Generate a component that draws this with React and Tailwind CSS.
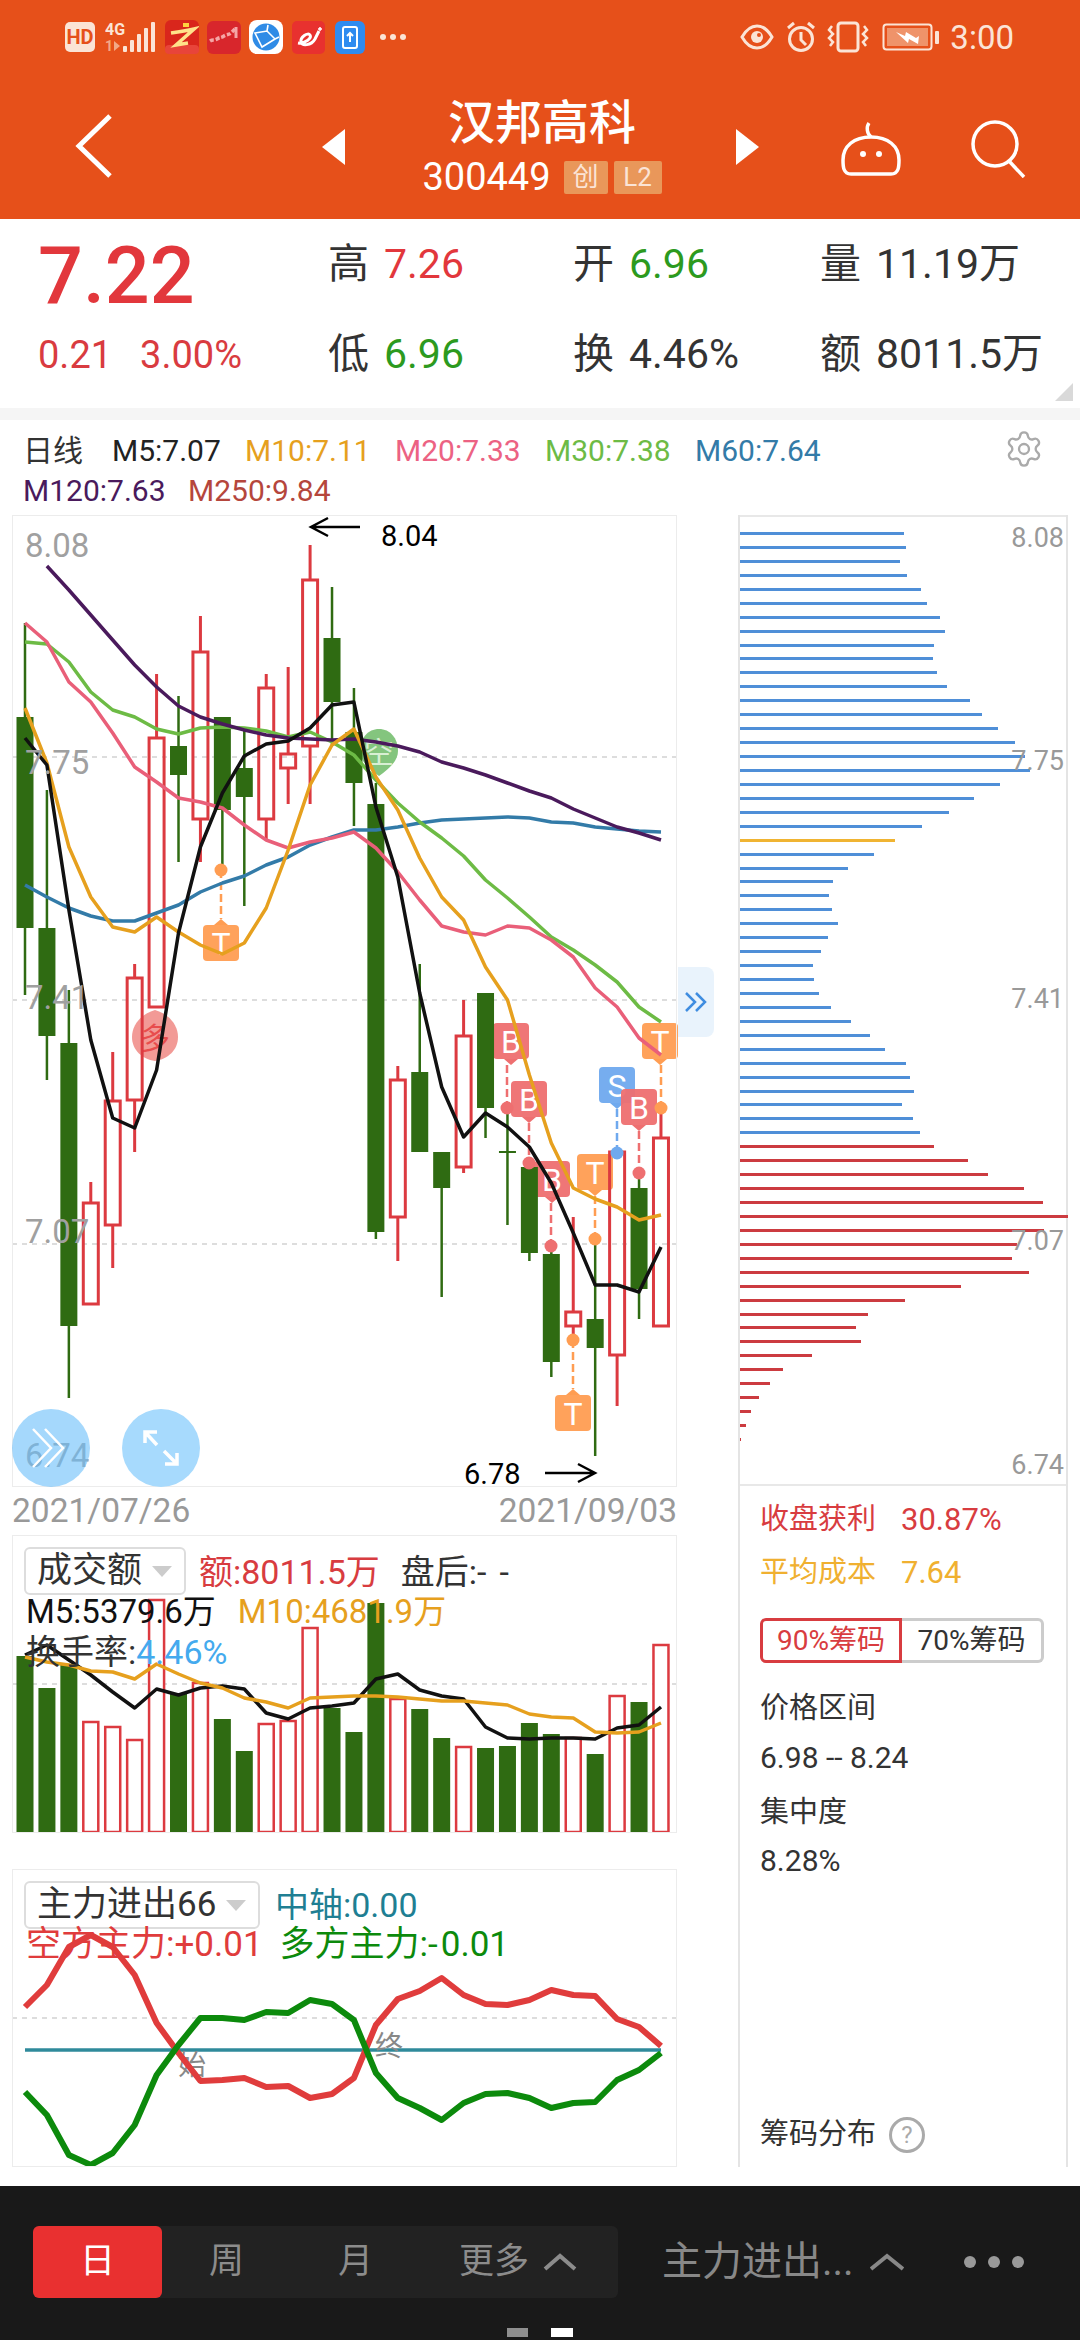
import { Settings } from "lucide-react";

const GREEN = "#2f6b12";
const RED = "#dc3a40";
const xAt = (i) => 25 + 21.93 * i;
const line = (ys, from = 0) => ys.map((y, i) => `${xAt(i + from).toFixed(1)},${y}`).join(" ");

// type, wick top, body top, body bottom, wick bottom
const candles = [
  ["g", 623, 717, 928, 995],
  ["g", 790, 928, 1036, 1080],
  ["g", 990, 1043, 1326, 1398],
  ["r", 1182, 1203, 1304, 1304],
  ["r", 1052, 1101, 1225, 1268],
  ["r", 964, 978, 1100, 1152],
  ["r", 674, 738, 1007, 1007],
  ["g", 696, 746, 775, 862],
  ["r", 616, 652, 819, 862],
  ["g", 717, 717, 810, 870],
  ["g", 730, 768, 797, 906],
  ["r", 674, 688, 819, 840],
  ["r", 667, 754, 768, 804],
  ["r", 545, 580, 746, 804],
  ["g", 587, 638, 702, 746],
  ["g", 688, 732, 783, 826],
  ["g", 783, 804, 1232, 1239],
  ["r", 1066, 1080, 1217, 1261],
  ["g", 964, 1072, 1152, 1152],
  ["g", 1152, 1152, 1188, 1297],
  ["r", 1000, 1036, 1167, 1173],
  ["g", 993, 993, 1108, 1138],
  ["g", 1108, 1151, 1153, 1225],
  ["g", 1163, 1167, 1253, 1261],
  ["g", 1247, 1254, 1362, 1377],
  ["r", 1217, 1312, 1326, 1340],
  ["g", 1240, 1319, 1348, 1456],
  ["r", 1152, 1152, 1355, 1406],
  ["g", 1173, 1188, 1289, 1319],
  ["r", 1108, 1138, 1326, 1326],
];

const m5 = [738, 765, 910, 1040, 1118, 1128, 1070, 933, 847, 793, 756, 744, 741, 728, 705, 702, 807, 877, 993, 1087, 1137, 1113, 1127, 1147, 1183, 1233, 1285, 1285, 1292, 1247];
const m10 = [708, 763, 847, 897, 927, 932, 917, 932, 945, 954, 943, 908, 850, 785, 745, 729, 777, 810, 858, 897, 920, 967, 1000, 1075, 1143, 1188, 1199, 1207, 1220, 1215];
const m20 = [623, 642, 682, 702, 733, 767, 782, 798, 802, 808, 825, 840, 848, 842, 838, 832, 848, 872, 900, 926, 932, 935, 926, 928, 940, 957, 988, 1007, 1038, 1055];
const m30 = [642, 644, 662, 692, 710, 717, 729, 734, 728, 727, 728, 731, 737, 732, 742, 755, 780, 803, 822, 838, 856, 880, 898, 917, 937, 950, 965, 982, 1007, 1022];
const m60 = [885, 897, 908, 916, 921, 921, 913, 905, 892, 883, 876, 865, 857, 845, 837, 830, 830, 827, 823, 820, 819, 818, 817, 818, 822, 823, 827, 829, 831, 832];
const m120 = [566, 590, 615, 640, 665, 687, 706, 717, 724, 730, 735, 738, 739, 740, 739, 742, 746, 752, 762, 768, 775, 783, 791, 798, 809, 818, 827, 833, 840];

const volTops = [1656, 1688, 1665, 1722, 1727, 1740, 1600, 1693, 1683, 1719, 1751, 1724, 1721, 1628, 1708, 1732, 1603, 1699, 1709, 1738, 1747, 1748, 1746, 1723, 1734, 1738, 1754, 1696, 1702, 1645];
const volM5 = [1655, 1645, 1660, 1675, 1692, 1708, 1689, 1695, 1688, 1686, 1689, 1713, 1719, 1708, 1706, 1703, 1679, 1674, 1690, 1696, 1699, 1727, 1738, 1739, 1738, 1738, 1739, 1728, 1725, 1707];
const volM10 = [1657, 1662, 1665, 1671, 1672, 1679, 1664, 1674, 1683, 1688, 1698, 1702, 1708, 1698, 1697, 1696, 1696, 1697, 1699, 1701, 1701, 1703, 1705, 1714, 1717, 1718, 1732, 1733, 1732, 1723];

const shortLine = [2007, 1985, 1947, 1935, 1947, 1975, 2023, 2053, 2081, 2080, 2078, 2087, 2086, 2098, 2094, 2078, 2025, 1999, 1991, 1978, 1995, 2004, 2005, 2000, 1990, 1995, 1996, 2019, 2027, 2046];
const longLine = [2092, 2115, 2155, 2165, 2153, 2125, 2075, 2045, 2018, 2018, 2020, 2012, 2013, 2000, 2004, 2020, 2073, 2098, 2108, 2120, 2103, 2094, 2093, 2098, 2108, 2103, 2102, 2080, 2070, 2053];

const chipBlue = [164, 166, 160, 167, 181, 187, 200, 205, 194, 193, 197, 207, 230, 242, 258, 275, 285, 290, 260, 234, 209, 182];
const chipBlue2 = [134, 108, 93, 89, 92, 98, 88, 81, 73, 74, 79, 91, 111, 130, 145, 166, 170, 174, 162, 173, 180];
const chipRed = [194, 228, 248, 284, 303, 328, 304, 277, 272, 289, 221, 165, 128, 116, 121, 72, 43, 30, 19, 11, 6, 1];
const chips = [
  ...chipBlue.map((w) => [w, "#4f8fd8"]),
  [155, "#f0b432"],
  ...chipBlue2.map((w) => [w, "#4f8fd8"]),
  ...chipRed.map((w) => [w, "#cc3b40"]),
];

// box left/top, dot position, letter, colour
const markers = [
  { x: 203, y: 925, dx: 221, dy: 870, t: "T", c: "#ff9d52", up: true },
  { x: 493, y: 1023, dx: 507, dy: 1108, t: "B", c: "#ee6f70" },
  { x: 511, y: 1081, dx: 529, dy: 1163, t: "B", c: "#ee6f70" },
  { x: 534, y: 1161, dx: 551, dy: 1246, t: "B", c: "#ee6f70" },
  { x: 577, y: 1154, dx: 595, dy: 1239, t: "T", c: "#ff9d52" },
  { x: 599, y: 1067, dx: 617, dy: 1153, t: "S", c: "#6fa9ee" },
  { x: 621, y: 1089, dx: 639, dy: 1173, t: "B", c: "#ee6f70" },
  { x: 642, y: 1023, dx: 661, dy: 1108, t: "T", c: "#ff9d52" },
  { x: 555, y: 1395, dx: 573, dy: 1340, t: "T", c: "#ff9d52", up: true },
];

function Marker({ m }) {
  const cx = m.x + 18;
  const tipY = m.up ? m.y - 6 : m.y + 42;
  return (
    <g>
      <line x1={m.dx} y1={m.up ? m.dy : tipY} x2={m.dx} y2={m.up ? tipY : m.dy} stroke={m.c} strokeWidth="2.5" strokeDasharray="8 4" />
      <rect x={m.x} y={m.y} width="36" height="36" rx="4" fill={m.c} opacity="0.95" />
      <polygon points={m.up ? `${cx - 7},${m.y} ${cx + 7},${m.y} ${cx},${tipY}` : `${cx - 7},${m.y + 36} ${cx + 7},${m.y + 36} ${cx},${tipY}`} fill={m.c} />
      <text x={cx} y={m.y + 30} textAnchor="middle" fontSize="32" fill="#fff" fontFamily="Roboto">{m.t}</text>
    </g>
  );
}

function MainChart() {
  return (
    <svg viewBox="12 515 665 972" className="block h-[972px] w-[665px] overflow-visible">
      {[757, 1000, 1244].map((y) => (
        <line key={y} x1="12" x2="677" y1={y} y2={y} stroke="#ddd" strokeWidth="2" strokeDasharray="5 5" />
      ))}
      <path d="M379 729c11 0 19 9 19 22 0 10-9 18-19 25-10-7-19-15-19-25 0-13 8-22 19-22z" fill="#84c57e" />
      <text x="379" y="763" textAnchor="middle" fontSize="30" fill="#d8efd4" fontFamily="Noto Sans CJK SC">空</text>
      <path d="M155 1010c14 4 23 15 23 27 0 13-10 22-23 24-13-2-23-11-23-24 0-12 9-23 23-27z" fill="#f29a96" />
      <text x="155" y="1049" textAnchor="middle" fontSize="30" fill="#e84d4d" fontFamily="Noto Sans CJK SC">多</text>
      {markers.map((m, i) => (
        <Marker key={i} m={m} />
      ))}
      {candles.map(([type, wt, bt, bb, wb], i) => {
        const x = xAt(i);
        if (type === "g") {
          return (
            <g key={i}>
              <line x1={x} x2={x} y1={wt} y2={wb} stroke={GREEN} strokeWidth="2.5" />
              <rect x={x - 8.5} y={bt} width="17" height={bb - bt} fill={GREEN} />
            </g>
          );
        }
        return (
          <g key={i} stroke={RED} strokeWidth="3">
            <line x1={x} x2={x} y1={wt} y2={bt} />
            <line x1={x} x2={x} y1={bb} y2={wb} />
            <rect x={x - 7.5} y={bt} width="15" height={bb - bt} fill="none" />
          </g>
        );
      })}
      {markers.map((m, i) => (
        <circle key={i} cx={m.dx} cy={m.dy} r="6.5" fill={m.c} />
      ))}
      <g fill="none" strokeWidth="3.5" strokeLinejoin="round">
        <polyline points={line(m60)} stroke="#337ba8" />
        <polyline points={line(m30)} stroke="#6dbb45" />
        <polyline points={line(m20)} stroke="#e95f79" />
        <polyline points={line(m120, 1)} stroke="#4a1a5c" />
        <polyline points={line(m10)} stroke="#e6a01e" />
        <polyline points={line(m5)} stroke="#111" />
      </g>
      <g fill="none" stroke="#000" strokeWidth="2.5">
        <path d="M360 527H311M328 518l-17 9 17 9" />
        <path d="M545 1473H595M578 1464l17 9-17 9" />
      </g>
      <text x="381" y="546" fontSize="29" fill="#000" fontFamily="Roboto">8.04</text>
      <text x="464" y="1484" fontSize="29" fill="#000" fontFamily="Roboto">6.78</text>
    </svg>
  );
}

function VolumeChart() {
  return (
    <svg viewBox="12 1535 665 298" className="block h-[298px] w-[665px]">
      <line x1="12" x2="677" y1="1684" y2="1684" stroke="#ddd" strokeWidth="2" strokeDasharray="5 5" />
      {volTops.map((top, i) => {
        const x = xAt(i);
        return candles[i][0] === "g" ? (
          <rect key={i} x={x - 8.5} y={top} width="17" height={1833 - top} fill={GREEN} />
        ) : (
          <rect key={i} x={x - 7.5} y={top} width="15" height={1832 - top} fill="#fff" stroke={RED} strokeWidth="2.5" />
        );
      })}
      <g fill="none" strokeWidth="3.5" strokeLinejoin="round">
        <polyline points={line(volM5)} stroke="#111" />
        <polyline points={line(volM10)} stroke="#e6a01e" />
      </g>
    </svg>
  );
}

function FlowChart() {
  return (
    <svg viewBox="12 1869 665 298" className="block h-[298px] w-[665px]">
      <line x1="12" x2="677" y1="2018" y2="2018" stroke="#ddd" strokeWidth="2" strokeDasharray="5 5" />
      <line x1="25" x2="661" y1="2050" y2="2050" stroke="#2f8a9b" strokeWidth="3.5" />
      <text x="178" y="2075" fontSize="28" fill="#888" fontFamily="Noto Sans CJK SC">始</text>
      <text x="375" y="2056" fontSize="28" fill="#888" fontFamily="Noto Sans CJK SC">终</text>
      <g fill="none" strokeWidth="6" strokeLinejoin="round">
        <polyline points={line(shortLine)} stroke="#e03c3c" />
        <polyline points={line(longLine)} stroke="#0c8a0c" />
      </g>
    </svg>
  );
}

function Stat({ label, value, color = "text-[#333]" }) {
  return (
    <div className="flex h-[50px] items-center gap-[15px] text-[#333]">
      <span className="text-[41px]">{label}</span>
      <span className={`text-[41px] ${color}`}>{value}</span>
    </div>
  );
}

function StatusBar() {
  return (
    <div className="flex h-[74px] items-center text-[#fbe4d6]">
      <span className="ml-[65px] flex h-[30px] w-[30px] items-center justify-center rounded-[5px] bg-[#fbe4d6] text-[20px] font-bold leading-none text-[#e6501a]">HD</span>
      <svg width="50" height="32" viewBox="0 0 50 32" className="ml-[10px]">
        <text x="0" y="14" fontSize="16" fontWeight="700" fill="#fbe4d6" fontFamily="Roboto">4G</text>
        <text x="0" y="30" fontSize="14" fontWeight="700" fill="#f2a987" fontFamily="Roboto">1</text>
        <path d="M9 20l6 5-6 5z" fill="#f2a987" />
        <g fill="#fbe4d6">
          <rect x="18" y="25" width="4" height="6" rx="1" />
          <rect x="25" y="19" width="4" height="12" rx="1" />
          <rect x="32" y="13" width="4" height="18" rx="1" />
          <rect x="39" y="7" width="4" height="24" rx="1" />
          <rect x="46" y="1" width="4" height="30" rx="1" />
        </g>
      </svg>
      <svg width="34" height="34" viewBox="0 0 34 34" className="ml-[10px]">
        <rect width="34" height="34" rx="6" fill="#d9261c" />
        <rect y="25" width="34" height="9" rx="4" fill="#e8443a" />
        <path d="M6 13c7-1 14-2 23-4L11 25l12-2" fill="none" stroke="#ffe28a" strokeWidth="3.5" />
        <path d="M18 3h6v4h-6z" fill="#ffd23f" />
      </svg>
      <svg width="34" height="33" viewBox="0 0 34 33" className="ml-[8px]">
        <rect width="34" height="33" rx="6" fill="#d8262c" />
        <path d="M3 20c3-2 4 0 7-2s4-1 7-3 5-1 7-3 4-4 5-5" fill="none" stroke="#f5a6a6" strokeWidth="3.5" strokeDasharray="4 2" />
        <path d="M29 6v11" stroke="#f5a6a6" strokeWidth="3" />
      </svg>
      <svg width="34" height="34" viewBox="0 0 34 34" className="ml-[8px]">
        <rect width="34" height="34" rx="8" fill="#fff" />
        <circle cx="17" cy="17" r="13.5" fill="#2f8be6" />
        <path d="M6 13l12-2 8 8-13 8zM18 11l1-6M26 19l4-2M13 27l-7-14" fill="none" stroke="#fff" strokeWidth="1.6" />
      </svg>
      <svg width="33" height="33" viewBox="0 0 33 33" className="ml-[9px]">
        <rect width="33" height="33" rx="5" fill="#e8312f" />
        <path d="M6 22c7 1 14-5 12-8s-10 2-9 7c1 4 10 4 14-3l4-8" fill="none" stroke="#fff" strokeWidth="3" />
        <path d="M26 8h4M28 6v4" stroke="#fff" strokeWidth="1.5" />
      </svg>
      <svg width="30" height="33" viewBox="0 0 30 33" className="ml-[10px]">
        <rect width="30" height="33" rx="6" fill="#2f8bf0" />
        <rect x="8" y="6" width="14" height="21" rx="2" fill="none" stroke="#fff" strokeWidth="2" />
        <path d="M15 21v-9M12 15l3-3 3 3" fill="none" stroke="#fff" strokeWidth="2" />
      </svg>
      <span className="ml-[15px] flex gap-[4px]">
        <i className="h-[6px] w-[6px] rounded-full bg-[#fbe4d6]" />
        <i className="h-[6px] w-[6px] rounded-full bg-[#fbe4d6]" />
        <i className="h-[6px] w-[6px] rounded-full bg-[#fbe4d6]" />
      </span>
      <svg width="34" height="26" viewBox="0 0 34 26" fill="none" stroke="currentColor" strokeWidth="3" className="ml-auto">
        <path d="M2 13C6 6 11 2 17 2s11 4 15 11c-4 7-9 11-15 11S6 20 2 13z" />
        <circle cx="17" cy="13" r="6" fill="currentColor" stroke="none" />
        <circle cx="19" cy="11" r="2" fill="#e6501a" stroke="none" />
      </svg>
      <svg width="32" height="32" viewBox="0 0 32 32" fill="none" stroke="currentColor" strokeWidth="3" className="ml-[11px]">
        <circle cx="16" cy="18" r="11.5" />
        <path d="M16 11v8l5 5M3 7l6-5M29 7l-6-5" />
      </svg>
      <svg width="42" height="32" viewBox="0 0 42 32" fill="none" stroke="currentColor" strokeWidth="3" className="ml-[10px]">
        <rect x="11" y="2" width="20" height="28" rx="3" />
        <path d="M5 5 2 9l4 4-4 4 4 4-3 4M37 5l3 4-4 4 4 4-4 4 3 4" strokeWidth="2.5" />
      </svg>
      <svg width="58" height="28" viewBox="0 0 58 28" className="ml-[13px]">
        <rect x="1.5" y="1.5" width="48" height="25" rx="3" fill="none" stroke="currentColor" strokeWidth="2" />
        <rect x="5" y="5" width="41" height="18" fill="#ef936a" />
        <rect x="53" y="8" width="4" height="13" rx="1" fill="currentColor" />
        <path d="M14 9l9 4 1-4 10 6 3-2-1 8-9-5-1 4z" fill="#fff" />
      </svg>
      <span className="ml-[10px] mr-[66px] text-[33px] leading-none">3:00</span>
    </div>
  );
}

function NavBar() {
  return (
    <div className="relative flex h-[145px] items-center">
      <svg width="40" height="66" viewBox="0 0 40 66" fill="none" stroke="#fff" strokeWidth="5" className="ml-[74px] mb-[2px]">
        <path d="M36 3 5 33l31 30" />
      </svg>
      <div className="ml-[208px] border-y-[18px] border-r-[23px] border-y-transparent border-r-white" />
      <div className="ml-[75px] flex w-[244px] flex-col items-center">
        <div className="text-[47px] font-medium leading-[56px] text-white">汉邦高科</div>
        <div className="mt-[5px] flex items-center">
          <span className="text-[38px] leading-[42px] text-white">300449</span>
          <span className="ml-[13px] flex h-[33px] w-[44px] items-center justify-center rounded-[2px] bg-[#e9975a] text-[26px] text-[#fbe4d6]">创</span>
          <span className="ml-[6px] flex h-[33px] w-[48px] items-center justify-center rounded-[2px] bg-[#e9975a] text-[26px] text-[#fbe4d6]">L2</span>
        </div>
      </div>
      <div className="ml-[72px] border-y-[18px] border-l-[23px] border-y-transparent border-l-white" />
      <svg width="62" height="58" viewBox="0 0 62 58" fill="none" stroke="#fff" strokeWidth="3.5" className="ml-[81px] mt-[2px]">
        <path d="M31 18c-4-3-5-10-2-14" />
        <path d="M3 41C3 27 14 18 31 18s28 9 28 23c0 6 0 14-8 14H11c-8 0-8-8-8-14z" />
        <circle cx="23" cy="35" r="3" fill="#fff" stroke="none" />
        <circle cx="39" cy="35" r="3" fill="#fff" stroke="none" />
      </svg>
      <svg width="58" height="58" viewBox="0 0 58 58" fill="none" stroke="#fff" strokeWidth="3.5" className="ml-[68px] mt-[4px]">
        <circle cx="25" cy="24" r="22" />
        <path d="M39 41l15 16" />
      </svg>
    </div>
  );
}

function QuoteBlock() {
  return (
    <div className="relative grid h-[189px] grid-cols-[290px_245px_247px_auto] pl-[38px] pt-[21px]">
      <div className="flex flex-col">
        <div className="h-[90px] text-[79px] font-medium leading-[72px] text-[#e2373c]">7.22</div>
        <div className="flex h-[50px] items-center gap-[28px] text-[38px] text-[#d93b40]">
          <span>0.21</span>
          <span>3.00%</span>
        </div>
      </div>
      <div className="flex flex-col gap-[40px]">
        <Stat label="高" value="7.26" color="text-[#e2373c]" />
        <Stat label="低" value="6.96" color="text-[#2c9a1e]" />
      </div>
      <div className="flex flex-col gap-[40px]">
        <Stat label="开" value="6.96" color="text-[#2c9a1e]" />
        <Stat label="换" value="4.46%" />
      </div>
      <div className="flex flex-col gap-[40px]">
        <Stat label="量" value="11.19万" />
        <Stat label="额" value="8011.5万" />
      </div>
      <svg width="18" height="18" viewBox="0 0 18 18" className="absolute right-[7px] top-[164px]">
        <path d="M18 0v18H0z" fill="#d9d9d9" />
      </svg>
    </div>
  );
}

function MaLegend() {
  return (
    <div className="relative h-[95px] pl-[23px] pt-[11px] text-[30px] leading-[40px]">
      <div className="flex">
        <span className="w-[89px] text-[#333]">日线</span>
        <span className="w-[133px] text-[#222]">M5:7.07</span>
        <span className="w-[150px] text-[#e6a01e]">M10:7.11</span>
        <span className="w-[150px] text-[#ec6283]">M20:7.33</span>
        <span className="w-[150px] text-[#6dbb45]">M30:7.38</span>
        <span className="text-[#337ba8]">M60:7.64</span>
      </div>
      <div className="flex">
        <span className="w-[165px] text-[#4a1a5c]">M120:7.63</span>
        <span className="text-[#b5463c]">M250:9.84</span>
      </div>
      <Settings className="absolute right-[36px] top-[9px] text-[#aaa]" size={40} strokeWidth={1.4} />
    </div>
  );
}

function Selector({ label, className }) {
  return (
    <div className={`absolute left-[12px] top-[12px] flex h-[48px] items-center rounded-[6px] border-2 border-[#ddd] bg-white pl-[11px] text-[#333] ${className}`}>
      {label}
      <span className="absolute right-[12px] top-[17px] border-x-[10px] border-t-[11px] border-x-transparent border-t-[#ccc]" />
    </div>
  );
}

function ChipPanel() {
  return (
    <div className="flex h-[1652px] w-[330px] flex-col border-x-2 border-[#e4e4e4] text-[#333]">
      <div className="relative h-[971px] border-b-2 border-t-2 border-[#e8e8e8]">
        <div className="flex flex-col gap-[10.94px] pt-[15px]">
          {chips.map(([w, c], i) => (
            <div key={i} className="h-[3px]" style={{ width: w, background: c }} />
          ))}
        </div>
        <span className="absolute right-[2px] top-[4px] text-[27px] leading-[34px] text-[#999]">8.08</span>
        <span className="absolute right-[2px] top-[227px] text-[27px] leading-[34px] text-[#999]">7.75</span>
        <span className="absolute right-[2px] top-[465px] text-[27px] leading-[34px] text-[#999]">7.41</span>
        <span className="absolute right-[2px] top-[707px] text-[27px] leading-[34px] text-[#999]">7.07</span>
        <span className="absolute right-[2px] top-[931px] text-[27px] leading-[34px] text-[#999]">6.74</span>
      </div>
      <div className="flex flex-1 flex-col px-[20px] text-[29px]">
        <div className="mt-[14px] flex h-[40px] items-center gap-[25px] text-[#d83c40]">
          <span>收盘获利</span>
          <span className="text-[31px]">30.87%</span>
        </div>
        <div className="mt-[13px] flex h-[40px] items-center gap-[25px] text-[#f0b030]">
          <span>平均成本</span>
          <span className="text-[31px]">7.64</span>
        </div>
        <div className="mt-[25px] flex h-[45px] w-[284px] text-[28px]">
          <span className="flex w-[142px] items-center justify-center rounded-l-[6px] border-[3px] border-[#d83c40] text-[#d83c40]">90%筹码</span>
          <span className="flex w-[142px] items-center justify-center rounded-r-[6px] border-y-[3px] border-r-[3px] border-[#ccc]">70%筹码</span>
        </div>
        <div className="mt-[25px] leading-[40px]">价格区间</div>
        <div className="mt-[10px] text-[30px] leading-[40px]">6.98 -- 8.24</div>
        <div className="mt-[14px] leading-[40px]">集中度</div>
        <div className="mt-[9px] text-[30px] leading-[40px]">8.28%</div>
        <div className="mt-auto mb-[12px] flex h-[40px] items-center gap-[13px]">
          <span>筹码分布</span>
          <span className="flex h-[36px] w-[36px] items-center justify-center rounded-full border-[3px] border-[#aaa] text-[24px] leading-none text-[#aaa]">?</span>
        </div>
      </div>
    </div>
  );
}

function LeftCharts() {
  return (
    <div className="w-[665px]">
      <div className="relative h-[972px] outline outline-1 -outline-offset-1 outline-[#ececec]">
        <MainChart />
        <span className="absolute left-[13px] top-[13px] text-[33px] leading-[36px] text-[#a0a0a0]">8.08</span>
        <span className="absolute left-[13px] top-[230px] text-[33px] leading-[36px] text-[#a0a0a0]">7.75</span>
        <span className="absolute left-[13px] top-[465px] text-[33px] leading-[36px] text-[#a0a0a0]">7.41</span>
        <span className="absolute left-[13px] top-[699px] text-[33px] leading-[36px] text-[#a0a0a0]">7.07</span>
        <span className="absolute left-[13px] top-[923px] text-[33px] leading-[36px] text-[#a0a0a0]">6.74</span>
        <div className="absolute left-0 top-[894px] flex h-[78px] w-[78px] items-center justify-center rounded-full bg-[#69befa]/60">
          <svg width="40" height="42" viewBox="0 0 40 42" fill="none" stroke="#fff" strokeWidth="2.5">
            <path d="M2 2l18 19L2 40M14 2l18 19-18 19" />
          </svg>
        </div>
        <div className="absolute left-[110px] top-[894px] flex h-[78px] w-[78px] items-center justify-center rounded-full bg-[#a7dafd]">
          <svg width="38" height="38" viewBox="0 0 38 38" fill="none" stroke="#fff" strokeWidth="3.5">
            <path d="M3 14V3h12M3 3l12 13M35 24v11H23M35 35 22 22" />
          </svg>
        </div>
        <div className="absolute left-[666px] top-[452px] flex h-[70px] w-[36px] items-center justify-center rounded-r-[8px] bg-[#e9f3fc]">
          <svg width="24" height="22" viewBox="0 0 24 22" fill="none" stroke="#3f8de0" strokeWidth="2.5">
            <path d="M2 2l9 9-9 9M12 2l9 9-9 9" />
          </svg>
        </div>
      </div>
      <div className="flex h-[48px] items-center justify-between text-[33.5px] text-[#999]">
        <span>2021/07/26</span>
        <span>2021/09/03</span>
      </div>
      <div className="relative h-[298px] outline outline-1 -outline-offset-1 outline-[#ececec]">
        <VolumeChart />
        <div className="absolute inset-0 text-[34px]">
          <Selector label="成交额" className="w-[162px] text-[35px]" />
          <div className="absolute left-[187px] top-[17px] flex gap-[21px] leading-[40px]">
            <span className="text-[#d83c40]">额:8011.5万</span>
            <span className="text-[#333]">
              盘后:<span className="tracking-[13px]">--</span>
            </span>
          </div>
          <div className="absolute left-[14px] top-[57px] flex gap-[22px] text-[33px] leading-[40px]">
            <span className="text-[#111]">M5:5379.6万</span>
            <span className="text-[#e6a01e]">M10:4681.9万</span>
          </div>
          <div className="absolute left-[14px] top-[97px] leading-[40px] text-[#333]">
            换手率:<span className="text-[#44aaee]">4.46%</span>
          </div>
        </div>
      </div>
      <div className="relative mt-[36px] h-[298px] outline outline-1 -outline-offset-1 outline-[#ececec]">
        <FlowChart />
        <div className="absolute inset-0 text-[34px]">
          <Selector label="主力进出66" className="w-[236px] text-[35px]" />
          <span className="absolute left-[263px] top-[16px] leading-[40px] text-[#1f7f93]">中轴:0.00</span>
          <div className="absolute left-[14px] top-[56px] flex gap-[17px] text-[35px] leading-[40px]">
            <span className="text-[#e03c3c]">空方主力:+0.01</span>
            <span className="text-[#0c8a0c]">
              多方主力:<span className="tracking-[3px]">-</span>0.01
            </span>
          </div>
        </div>
      </div>
    </div>
  );
}

function BottomBar() {
  return (
    <div className="relative flex h-[154px] items-start bg-[#191919] pl-[33px] pt-[40px] text-[#8c8c8c]">
      <div className="flex h-[72px] w-[585px] items-center rounded-[6px] bg-[#222] text-[35px]">
        <span className="flex h-[72px] w-[129px] items-center justify-center rounded-[6px] bg-[#e93030] text-white">日</span>
        <span className="flex w-[129px] justify-center">周</span>
        <span className="flex w-[129px] justify-center">月</span>
        <span className="ml-[39px] flex items-center gap-[14px]">
          更多
          <svg width="34" height="18" viewBox="0 0 34 18" fill="none" stroke="currentColor" strokeWidth="4">
            <path d="M2 16 17 3l15 13" />
          </svg>
        </span>
      </div>
      <div className="ml-[44px] flex h-[72px] items-center gap-[16px] text-[#888]">
        <span className="text-[40px]">主力进出...</span>
        <svg width="34" height="18" viewBox="0 0 34 18" fill="none" stroke="currentColor" strokeWidth="4">
          <path d="M1 16 17 3l16 13" />
        </svg>
      </div>
      <div className="ml-[60px] flex h-[72px] items-center gap-[12px]">
        <i className="h-[12px] w-[12px] rounded-full bg-[#999]" />
        <i className="h-[12px] w-[12px] rounded-full bg-[#999]" />
        <i className="h-[12px] w-[12px] rounded-full bg-[#999]" />
      </div>
      <div className="absolute left-[507px] top-[142px] flex gap-[23px]">
        <i className="h-[9px] w-[21px] bg-[#8f8f8f]" />
        <i className="h-[9px] w-[22px] bg-white" />
      </div>
    </div>
  );
}

export default function App() {
  return (
    <div className="flex h-[2340px] w-[1080px] flex-col overflow-hidden bg-white font-['Roboto','Noto_Sans_CJK_SC',sans-serif]">
      <header className="h-[219px] bg-[#e6501a]">
        <StatusBar />
        <NavBar />
      </header>
      <QuoteBlock />
      <div className="h-[12px] bg-[#f5f5f5]" />
      <MaLegend />
      <div className="flex items-start pl-[12px]">
        <LeftCharts />
        <div className="ml-[61px]">
          <ChipPanel />
        </div>
      </div>
      <div className="mt-[19px]">
        <BottomBar />
      </div>
    </div>
  );
}
